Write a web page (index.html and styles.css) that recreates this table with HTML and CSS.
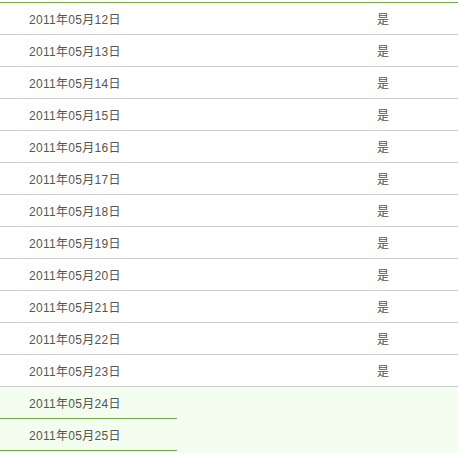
FILE: index.html
```html
<!DOCTYPE html>
<html>
<head>
<meta charset="utf-8">
<link rel="stylesheet" href="styles.css">
</head>
<body>
<div class="table">
  <div class="row"><div class="date">2011年05月12日</div><div class="flag">是</div></div>
  <div class="row"><div class="date">2011年05月13日</div><div class="flag">是</div></div>
  <div class="row"><div class="date">2011年05月14日</div><div class="flag">是</div></div>
  <div class="row"><div class="date">2011年05月15日</div><div class="flag">是</div></div>
  <div class="row"><div class="date">2011年05月16日</div><div class="flag">是</div></div>
  <div class="row"><div class="date">2011年05月17日</div><div class="flag">是</div></div>
  <div class="row"><div class="date">2011年05月18日</div><div class="flag">是</div></div>
  <div class="row"><div class="date">2011年05月19日</div><div class="flag">是</div></div>
  <div class="row"><div class="date">2011年05月20日</div><div class="flag">是</div></div>
  <div class="row"><div class="date">2011年05月21日</div><div class="flag">是</div></div>
  <div class="row"><div class="date">2011年05月22日</div><div class="flag">是</div></div>
  <div class="row"><div class="date">2011年05月23日</div><div class="flag">是</div></div>
  <div class="pending">
    <div class="row open"><div class="date">2011年05月24日</div><div class="flag"></div></div>
    <div class="row open"><div class="date">2011年05月25日</div><div class="flag"></div></div>
  </div>
</div>
</body>
</html>
```
FILE: styles.css
```css
html, body {
  margin: 0;
  padding: 0;
  background: #ffffff;
}
body {
  padding-top: 2px;
  font-family: "Liberation Sans", Arial, "Noto Sans CJK SC", sans-serif;
  font-size: 12px;
  color: #555555;
  overflow: hidden;
}
.table {
  border-top: 1px solid #72a845;
}
.row {
  display: grid;
  grid-template-columns: 177px 1fr;
  height: 31px;
  border-bottom: 1px solid #cccccc;
}
.date {
  display: flex;
  align-items: center;
  padding-left: 29px;
  padding-bottom: 1px;
  letter-spacing: 0.3px;
}
.flag {
  display: flex;
  align-items: center;
  padding-left: 200px;
  padding-bottom: 1px;
}
.pending {
  background: #f3fdf0;
  padding-bottom: 2px;
}
.row.open {
  border-bottom: none;
  height: 32px;
}
.row.open .date {
  border-bottom: 1px solid #72a845;
}
```
